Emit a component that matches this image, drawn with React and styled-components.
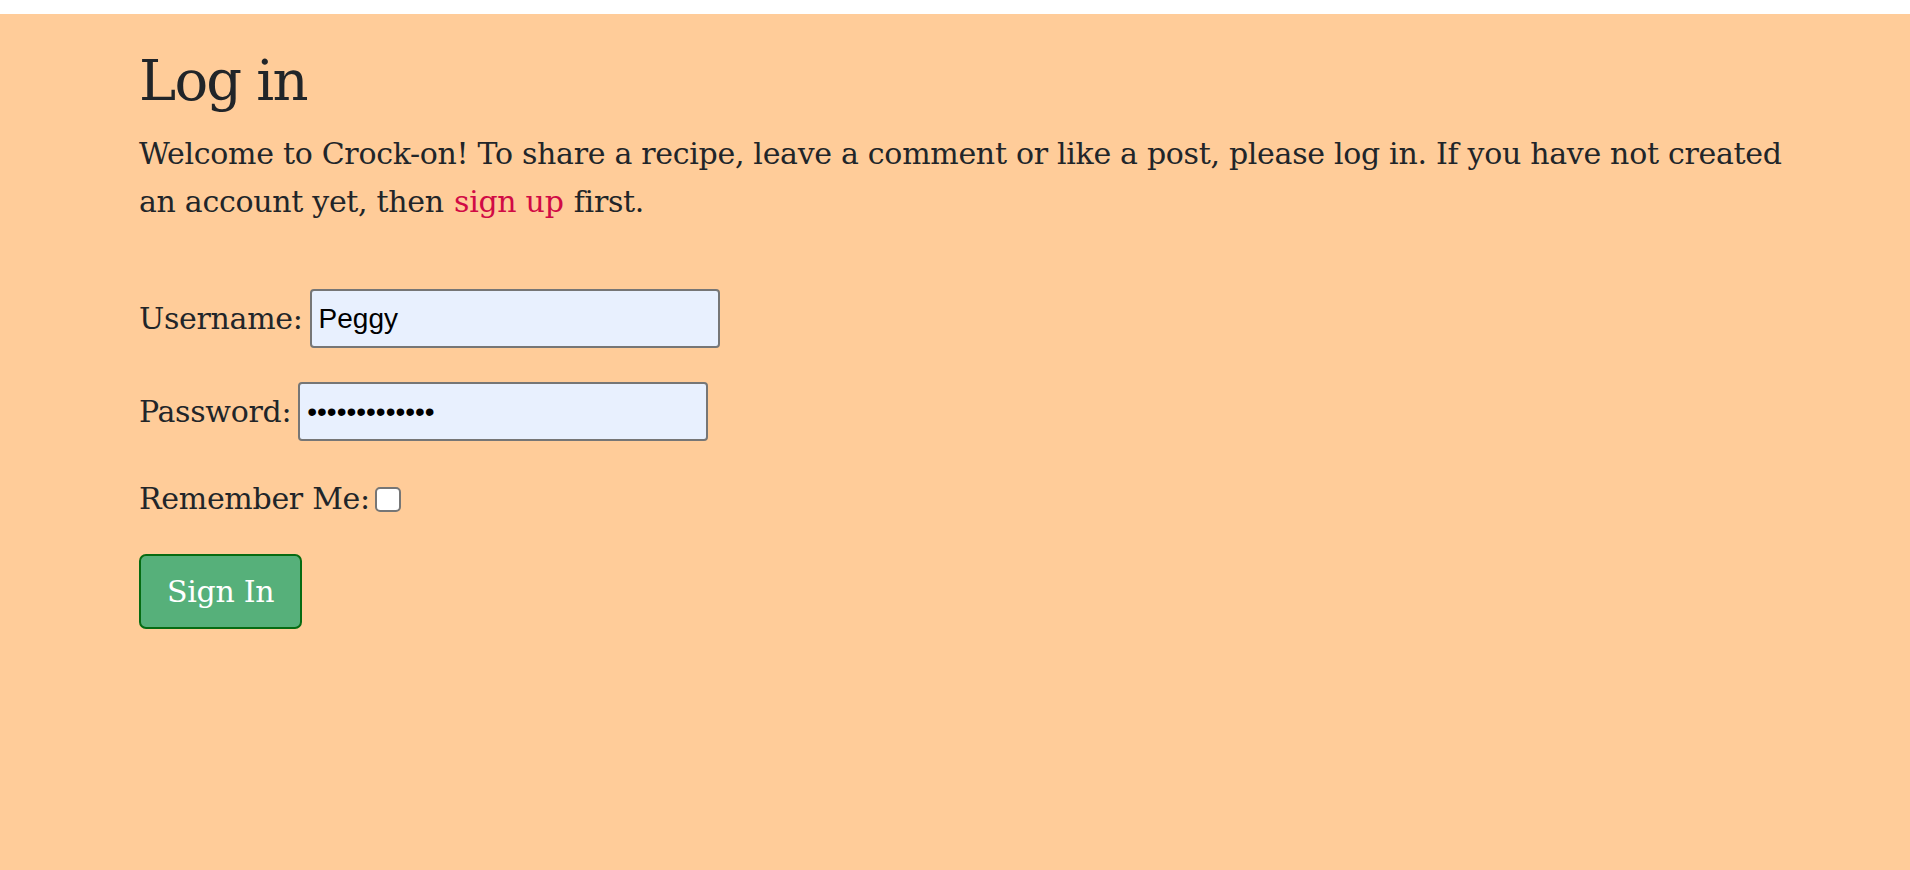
import React from 'react';
import styled, { createGlobalStyle } from 'styled-components';

const GlobalStyle = createGlobalStyle`
  html, body {
    margin: 0;
    padding: 0;
    height: 100%;
    background: #ffffff;
  }
  #root {
    min-height: 100%;
  }
`;

function App() {
  return (
    <>
      <GlobalStyle />
      <Page>
        <Container>
          <Title>Log in</Title>
          <Intro>
            Welcome to Crock-on! To share a recipe, leave a comment or like a post, please log in. If you have not created
            an account yet, then <SignUpLink href="#signup">sign up</SignUpLink> first.
          </Intro>

          <LoginForm onSubmit={e => e.preventDefault()}>
            <Row>
              <Label htmlFor="id_login">Username:</Label>
              <TextInput id="id_login" type="text" defaultValue="Peggy" />
            </Row>
            <Row>
              <Label htmlFor="id_password">Password:</Label>
              <TextInput id="id_password" type="password" defaultValue="crockpot12345" />
            </Row>
            <Row>
              <Label htmlFor="id_remember">Remember Me:</Label>
              <Checkbox id="id_remember" type="checkbox" />
            </Row>
            <SubmitButton type="submit">Sign In</SubmitButton>
          </LoginForm>
        </Container>
      </Page>
    </>
  );
}

export default App;

const Page = styled.main`
  margin-top: 14px;
  min-height: 856px;
  background-color: #ffcc99;
  color: #212529;
  font-family: "DejaVu Serif", "Liberation Serif", serif;
  letter-spacing: -0.3px;
`;

const Container = styled.div`
  width: 1660px;
  padding: 33px 0 0 139px;
`;

const Title = styled.h1`
  margin: 0 0 16px;
  font-size: 56px;
  font-weight: 400;
  line-height: 1.2;
  letter-spacing: -1.8px;
`;

const Intro = styled.p`
  margin: 0;
  font-size: 30px;
  line-height: 48px;
`;

const SignUpLink = styled.a`
  margin: 0 1px;
  color: #d10a45;
  text-decoration: none;
`;

const LoginForm = styled.form`
  display: flex;
  flex-direction: column;
  align-items: flex-start;
  gap: 34px;
  margin-top: 63px;
`;

const Row = styled.div`
  display: flex;
  align-items: center;
  font-size: 30px;
  line-height: 48px;
`;

const Label = styled.label`
  margin-right: 7px;
`;

const TextInput = styled.input`
  box-sizing: border-box;
  width: 410px;
  height: 59px;
  padding: 0 7px;
  border: 2px solid #767676;
  border-radius: 4px;
  background-color: #e8f0fe;
  color: #000;
  font-family: "Liberation Sans", Arial, sans-serif;
  font-size: 28px;
  letter-spacing: 0;
  outline: none;
`;

const Checkbox = styled.input`
  appearance: none;
  box-sizing: border-box;
  width: 26px;
  height: 25px;
  margin: 0 0 0 -2px;
  border: 2px solid #767676;
  border-radius: 5px;
  background: #ffffff;
`;

const SubmitButton = styled.button`
  box-sizing: border-box;
  height: 75px;
  margin-top: -3px;
  padding: 0 26px;
  border: 2px solid #066b12;
  border-radius: 7px;
  background-color: #56b07a;
  color: #ffffff;
  font-family: "DejaVu Serif", "Liberation Serif", serif;
  font-size: 30px;
  letter-spacing: -0.3px;
  cursor: pointer;
`;
